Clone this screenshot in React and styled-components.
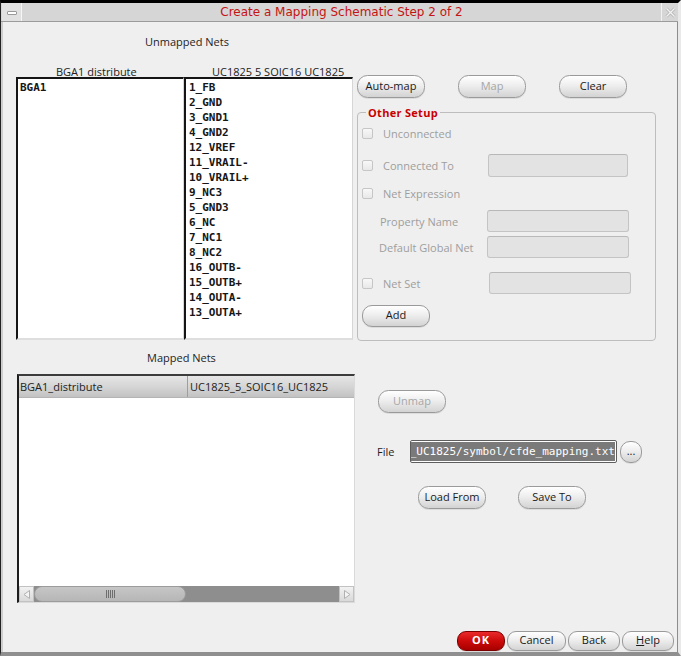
import React from "react";
import styled, { createGlobalStyle } from "styled-components";

const GlobalStyle = createGlobalStyle`
  html, body { margin: 0; padding: 0; background: #efefef; }
  body { font-family: "Open Sans", "DejaVu Sans", sans-serif; font-size: 11px; color: #1e1e1e; }
  * { box-sizing: border-box; }
`;

const Window = styled.div`
  width: 681px;
  height: 656px;
  display: flex;
  flex-direction: column;
  background: #efefef;
  border-top: 3px solid #000;
  border-left: 1px solid #222;
  border-right: 3px solid #e9e9e9;
  border-bottom: 4px solid #8f8f8f;
`;

const TitleBar = styled.div`
  height: 19px;
  flex: none;
  display: flex;
  background: #d6d6d6;
  border-bottom: 1px solid #9c9c9c;
`;

const MinButton = styled.div`
  width: 20px;
  margin-left: 1px;
  background: #e1e1e1;
  border-right: 1px solid #f6f6f6;
  display: flex;
  justify-content: center;
  padding-top: 8px;
`;

const Dash = styled.div`
  width: 10px;
  height: 4px;
  background: #fff;
  border: 1px solid #9a9a9a;
  border-radius: 1px;
`;

const Title = styled.div`
  flex: 1;
  text-align: center;
  font-family: "DejaVu Sans", sans-serif;
  font-size: 12px;
  line-height: 18px;
  color: #c41414;
`;

const CloseButton = styled.div`
  width: 17px;
  border-left: 1px solid #f2f2f2;
  display: flex;
  align-items: center;
  justify-content: center;
`;

const Body = styled.div`
  flex: 1;
  display: flex;
  flex-direction: column;
  border-left: 2px solid #cdcdcd;
  border-right: 1px solid #8d8d8d;
  padding-left: 13px;
  padding-right: 1px;
`;

const Section = styled.div`
  display: grid;
  grid-template-columns: 341px 299px;
`;

const Column = styled.div`
  display: flex;
  flex-direction: column;
  align-items: flex-start;
`;

const SectionTitle = styled.div`
  margin-top: ${(p) => p.$top}px;
  padding-left: ${(p) => p.$indent}px;
  line-height: 14px;
  font-size: 11px;
  color: #1e1e1e;
  white-space: nowrap;
`;

const ListsGrid = styled.div`
  margin-top: 17px;
  display: grid;
  grid-template-columns: 168px 169px;
`;

const ColumnHeader = styled.div`
  height: 11px;
  line-height: 11px;
  font-size: 11px;
  padding-left: ${(p) => p.$indent}px;
  white-space: nowrap;
  color: #222;
`;

const ListBox = styled.div`
  height: 263px;
  background: #fff;
  border-top: 2px solid #151515;
  border-left: 2px solid #151515;
  border-right: 1px solid #d6d6d6;
  border-bottom: 2px solid #dedede;
  padding-left: ${(p) => p.$pad}px;
  padding-top: 1px;
  overflow: hidden;
`;

const ListItem = styled.div`
  height: 15px;
  line-height: 15px;
  font-family: "DejaVu Sans Mono", "Liberation Mono", monospace;
  font-weight: bold;
  font-size: 11px;
  color: #161616;
  white-space: nowrap;
`;

const ButtonRow = styled.div`
  display: flex;
  gap: ${(p) => p.$gap}px;
  margin-top: ${(p) => p.$top}px;
  margin-left: ${(p) => p.$left || 0}px;
`;

const Button = styled.button`
  width: ${(p) => p.$w}px;
  height: ${(p) => p.$h || 23}px;
  padding: 0 0 2px 0;
  margin-left: ${(p) => p.$left || 0}px;
  margin-top: ${(p) => p.$top || 0}px;
  border: 1px solid #9a9a9a;
  border-radius: ${(p) => (p.$h || 23) / 2 - 1}px;
  background: linear-gradient(#ffffff 0%, #eeeeee 45%, #d3d3d3 100%);
  box-shadow: 0 1px 0 rgba(0, 0, 0, 0.08);
  font-family: "Open Sans", "DejaVu Sans", sans-serif;
  font-size: 11px;
  line-height: 14px;
  color: ${(p) => (p.disabled ? "#a6a6a6" : "#1a1a1a")};
  white-space: nowrap;
  flex: none;
`;

const OkButton = styled(Button)`
  border-color: #7a0000;
  background: linear-gradient(#ea2a2a 0%, #cc0a0a 50%, #a80000 100%);
  color: #fff;
  font-weight: bold;
  letter-spacing: 1px;
`;

const Mnemonic = styled.span`
  text-decoration: underline;
`;

const GroupBox = styled.fieldset`
  margin: 8px 0 0 0;
  padding: 0 0 13px 4px;
  width: 299px;
  border: 1px solid #bdbdbd;
  border-radius: 4px;
  display: flex;
  flex-direction: column;
  align-items: flex-start;
`;

const Legend = styled.legend`
  margin-left: 4px;
  padding: 0 2px;
  line-height: 13px;
  font-size: 11px;
  font-weight: bold;
  color: #c80000;
  letter-spacing: 0.3px;
`;

const Row = styled.div`
  display: flex;
  align-items: center;
  height: ${(p) => p.$h}px;
  margin-top: ${(p) => p.$top}px;
`;

const LabelCell = styled.div`
  width: ${(p) => p.$w}px;
  padding-left: ${(p) => p.$pad || 0}px;
  display: flex;
  align-items: center;
  gap: 10px;
  flex: none;
`;

const Checkbox = styled.span`
  width: 11px;
  height: 11px;
  border: 1px solid #c6c6c6;
  border-radius: 2px;
  background: linear-gradient(#f8f8f8, #e8e8e8);
  flex: none;
`;

const DimLabel = styled.span`
  color: #9e9e9e;
  font-size: 11px;
  white-space: nowrap;
`;

const DisabledInput = styled.div`
  width: ${(p) => p.$w}px;
  height: ${(p) => p.$h}px;
  background: #e3e3e3;
  border: 1px solid #c4c4c4;
  border-top-color: #b8b8b8;
  border-radius: 3px;
  flex: none;
`;

const Table = styled.div`
  margin-top: 9px;
  margin-left: 1px;
  width: 338px;
  height: 229px;
  display: flex;
  flex-direction: column;
  background: #fff;
  border-top: 2px solid #3c3c3c;
  border-left: 2px solid #1c1c1c;
  border-right: 1px solid #dadada;
  border-bottom: 1px solid #dadada;
`;

const TableHeader = styled.div`
  height: 22px;
  flex: none;
  display: flex;
  background: linear-gradient(#e6e6e6, #d2d2d2 60%, #c2c2c2);
  border-bottom: 1px solid #b4b4b4;
`;

const HeaderCell = styled.div`
  width: ${(p) => p.$w}px;
  flex: ${(p) => (p.$w ? "none" : 1)};
  padding-left: ${(p) => p.$pad}px;
  line-height: 21px;
  font-size: 11px;
  color: #222;
  white-space: nowrap;
  border-right: ${(p) => (p.$divider ? "1px solid #9e9e9e" : "none")};
`;

const TableBody = styled.div`
  flex: 1;
`;

const ScrollBar = styled.div`
  height: 16px;
  flex: none;
  display: flex;
`;

const ArrowBox = styled.div`
  width: 15px;
  flex: none;
  display: flex;
  align-items: center;
  justify-content: center;
  background: linear-gradient(#f2f2f2, #d9d9d9);
  border: 1px solid #c2c2c2;
`;

const Track = styled.div`
  flex: 1;
  background: #8e8e8e;
  display: flex;
`;

const Thumb = styled.div`
  width: 152px;
  height: 16px;
  border: 1px solid #9c9c9c;
  border-radius: 8px;
  background: linear-gradient(#c6c6c6, #b6b6b6);
  display: flex;
  align-items: center;
  justify-content: center;
  gap: 1px;
`;

const Grip = styled.span`
  width: 1px;
  height: 8px;
  background: #6e6e6e;
`;

const FileRow = styled.div`
  display: flex;
  align-items: center;
  margin-top: 27px;
  margin-left: 20px;
  height: 23px;
`;

const FileLabel = styled.span`
  width: 33px;
  font-size: 11px;
  color: #1e1e1e;
`;

const FileInput = styled.div`
  width: 207px;
  height: 23px;
  border: 1px solid #5e5e5e;
  border-radius: 2px;
  background: #fff;
  padding: 1px;
  display: flex;
  justify-content: flex-end;
  overflow: hidden;
`;

const Selected = styled.span`
  flex: none;
  height: 19px;
  line-height: 19px;
  background: #7a7a7a;
  color: #fff;
  font-family: "DejaVu Sans Mono", "Liberation Mono", monospace;
  font-size: 11px;
  white-space: nowrap;
`;

const Footer = styled.div`
  margin-top: auto;
  display: flex;
  justify-content: flex-end;
  gap: 2px;
  padding-right: 2px;
  padding-bottom: 1px;
`;

const sourceNets = ["BGA1"];
const targetNets = [
  "1_FB", "2_GND", "3_GND1", "4_GND2", "12_VREF", "11_VRAIL-", "10_VRAIL+", "9_NC3",
  "5_GND3", "6_NC", "7_NC1", "8_NC2", "16_OUTB-", "15_OUTB+", "14_OUTA-", "13_OUTA+",
];

export default function App() {
  return (
    <>
      <GlobalStyle />
      <Window>
        <TitleBar>
          <MinButton>
            <Dash />
          </MinButton>
          <Title>Create a Mapping Schematic Step 2 of 2</Title>
          <CloseButton>
            <svg width="11" height="11" viewBox="0 0 11 11">
              <path d="M1.5 1.5 L9.5 9.5 M9.5 1.5 L1.5 9.5" stroke="#b4b4b4" strokeWidth="3" />
              <path d="M1.5 1.5 L9.5 9.5 M9.5 1.5 L1.5 9.5" stroke="#f4f4f4" strokeWidth="1.3" />
            </svg>
          </CloseButton>
        </TitleBar>

        <Body>
          <Section>
            <Column>
              <SectionTitle $top={13} $indent={129}>Unmapped Nets</SectionTitle>
              <ListsGrid>
                <ColumnHeader $indent={40}>BGA1 distribute</ColumnHeader>
                <ColumnHeader $indent={28}>UC1825 5 SOIC16 UC1825</ColumnHeader>
                <ListBox $pad={2}>
                  {sourceNets.map((n) => (
                    <ListItem key={n}>{n}</ListItem>
                  ))}
                </ListBox>
                <ListBox $pad={3}>
                  {targetNets.map((n) => (
                    <ListItem key={n}>{n}</ListItem>
                  ))}
                </ListBox>
              </ListsGrid>
            </Column>

            <Column>
              <ButtonRow $gap={33} $top={53}>
                <Button $w={68}>Auto-map</Button>
                <Button $w={68} disabled>Map</Button>
                <Button $w={68}>Clear</Button>
              </ButtonRow>

              <GroupBox>
                <Legend>Other Setup</Legend>
                <Row $h={23} $top={3}>
                  <LabelCell $w={126}>
                    <Checkbox />
                    <DimLabel>Unconnected</DimLabel>
                  </LabelCell>
                </Row>
                <Row $h={23} $top={9}>
                  <LabelCell $w={126}>
                    <Checkbox />
                    <DimLabel>Connected To</DimLabel>
                  </LabelCell>
                  <DisabledInput $w={140} $h={23} />
                </Row>
                <Row $h={22} $top={5}>
                  <LabelCell $w={126}>
                    <Checkbox />
                    <DimLabel>Net Expression</DimLabel>
                  </LabelCell>
                </Row>
                <Row $h={22} $top={6}>
                  <LabelCell $w={125} $pad={18}>
                    <DimLabel>Property Name</DimLabel>
                  </LabelCell>
                  <DisabledInput $w={142} $h={22} />
                </Row>
                <Row $h={22} $top={4}>
                  <LabelCell $w={125} $pad={17}>
                    <DimLabel>Default Global Net</DimLabel>
                  </LabelCell>
                  <DisabledInput $w={142} $h={22} />
                </Row>
                <Row $h={22} $top={14}>
                  <LabelCell $w={127}>
                    <Checkbox />
                    <DimLabel>Net Set</DimLabel>
                  </LabelCell>
                  <DisabledInput $w={142} $h={22} />
                </Row>
                <Row $h={22} $top={11}>
                  <Button $w={68} $h={22}>Add</Button>
                </Row>
              </GroupBox>
            </Column>
          </Section>

          <Section>
            <Column>
              <SectionTitle $top={10} $indent={131}>Mapped Nets</SectionTitle>
              <Table>
                <TableHeader>
                  <HeaderCell $w={169} $pad={1} $divider>BGA1_distribute</HeaderCell>
                  <HeaderCell $pad={2}>UC1825_5_SOIC16_UC1825</HeaderCell>
                </TableHeader>
                <TableBody />
                <ScrollBar>
                  <ArrowBox>
                    <svg width="8" height="9" viewBox="0 0 8 9">
                      <path d="M6.5 0.5 L1 4.5 L6.5 8.5 Z" fill="#f4f4f4" stroke="#b0b0b0" />
                    </svg>
                  </ArrowBox>
                  <Track>
                    <Thumb>
                      <Grip />
                      <Grip />
                      <Grip />
                      <Grip />
                      <Grip />
                    </Thumb>
                  </Track>
                  <ArrowBox>
                    <svg width="8" height="9" viewBox="0 0 8 9">
                      <path d="M1.5 0.5 L7 4.5 L1.5 8.5 Z" fill="#f4f4f4" stroke="#b0b0b0" />
                    </svg>
                  </ArrowBox>
                </ScrollBar>
              </Table>
            </Column>

            <Column>
              <Button $w={68} $left={21} $top={49} disabled>Unmap</Button>
              <FileRow>
                <FileLabel>File</FileLabel>
                <FileInput>
                  <Selected>_UC1825/symbol/cfde_mapping.txt</Selected>
                </FileInput>
                <Button $w={22} $h={22} $left={3}>...</Button>
              </FileRow>
              <ButtonRow $gap={32} $top={23} $left={61}>
                <Button $w={68}>Load From</Button>
                <Button $w={68}>Save To</Button>
              </ButtonRow>
            </Column>
          </Section>

          <Footer>
            <OkButton $w={48} $h={20}>OK</OkButton>
            <Button $w={59} $h={20}>Cancel</Button>
            <Button $w={52} $h={20}>Back</Button>
            <Button $w={52} $h={20}><Mnemonic>H</Mnemonic>elp</Button>
          </Footer>
        </Body>
      </Window>
    </>
  );
}
